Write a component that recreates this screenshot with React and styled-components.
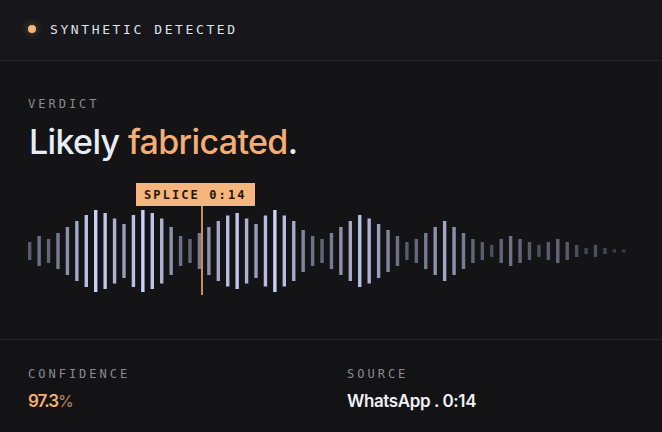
import React from 'react';
import styled, { createGlobalStyle } from 'styled-components';

const GlobalStyle = createGlobalStyle`
html, body {
    margin: 0;
    padding: 0;
    background: #131316;
}
* {
    box-sizing: border-box;
}
`;

const mono = `"DejaVu Sans Mono", "Liberation Mono", monospace`;
const sans = `Inter, "Noto Sans", "Liberation Sans", sans-serif`;

const Card = styled.div`
width: 662px;
height: 432px;
display: flex;
flex-direction: column;
background: #141417;
overflow: hidden;
`;

const Header = styled.header`
height: 61px;
flex-shrink: 0;
display: flex;
align-items: center;
gap: 14px;
padding: 0 28px 2px 28px;
background: #17171b;
border-bottom: 1px solid #26262b;
`;

const Dot = styled.span`
width: 8px;
height: 8px;
border-radius: 50%;
background: #f6b77c;
box-shadow: 0 0 8px rgba(246, 183, 124, 0.45);
`;

const Status = styled.span`
font-family: ${mono};
font-size: 13px;
letter-spacing: 2.6px;
color: #dfe2e8;
`;

const Main = styled.section`
padding: 35px 28px 44px 28px;
border-bottom: 1px solid #232328;
`;

const Label = styled.div`
font-family: ${mono};
font-size: 12px;
line-height: 16px;
letter-spacing: 3px;
color: #8a8a91;
`;

const Headline = styled.h1`
margin: 11px 0 0 1px;
font-family: ${sans};
font-size: 34px;
line-height: 37px;
font-weight: 500;
letter-spacing: -0.65px;
color: #e7edf7;
`;

const Accent = styled.span`
color: #f4ae74;
`;

const Wave = styled.div`
position: relative;
margin-top: 23px;
padding-top: 24px;
`;

const Bars = styled.svg`
display: block;
width: 606px;
height: 88px;
`;

const SpliceTag = styled.div`
position: absolute;
top: 0;
left: ${props => props.left}px;
padding: 0 8px;
height: 23px;
display: flex;
align-items: center;
background: #f5b57c;
font-family: ${mono};
font-size: 12px;
font-weight: bold;
letter-spacing: 2.1px;
color: #1d1712;
`;

const SpliceLine = styled.div`
position: absolute;
top: 23px;
bottom: 0;
left: ${props => props.left}px;
width: 2px;
background: #c98e5b;
`;

const Footer = styled.footer`
flex: 1;
display: grid;
grid-template-columns: 1fr 1fr;
column-gap: 32px;
padding: 26px 28px 0 28px;
background: #131316;
`;

const Stat = styled.div`
display: flex;
flex-direction: column;
gap: 8px;
`;

const Value = styled.div`
font-family: ${sans};
font-size: 17px;
line-height: 22px;
font-weight: 600;
letter-spacing: ${props => props.accent ? '-1px' : '-0.4px'};
color: ${props => props.accent ? '#f4ae74' : '#eef0f4'};
`;

const Unit = styled.span`
font-weight: 400;
font-size: 16px;
letter-spacing: 0;
opacity: 0.75;
`;

const heights = [
    18, 30, 24, 36, 48, 60, 72, 82, 76, 65, 54, 72, 82, 76, 65, 48,
    30, 24, 36, 48, 60, 71, 76, 65, 54, 71, 82, 71, 60, 42, 30, 24,
    36, 48, 60, 72, 65, 54, 42, 30, 18, 24, 36, 48, 60, 48, 36, 24,
    18, 12, 24, 30, 24, 18, 12, 18, 24, 18, 12, 6, 12, 6, 3, 3,
];

function Waveform() {
    return (
        <Bars viewBox="0 0 606 88">
            {heights.map((h, i) => (
                <rect
                    key={i}
                    x={i * 9.43}
                    y={44 - h / 2}
                    width={3.4}
                    height={h}
                    fill="#cbd1f7"
                    opacity={0.2 + 0.8 * (h / 82)}
                />
            ))}
        </Bars>
    );
}

function App() {
    return (
        <Card>
            <GlobalStyle />
            <Header>
                <Dot />
                <Status>SYNTHETIC DETECTED</Status>
            </Header>
            <Main>
                <Label>VERDICT</Label>
                <Headline>Likely <Accent>fabricated</Accent>.</Headline>
                <Wave>
                    <Waveform />
                    <SpliceTag left={108}>SPLICE 0:14</SpliceTag>
                    <SpliceLine left={173} />
                </Wave>
            </Main>
            <Footer>
                <Stat>
                    <Label>CONFIDENCE</Label>
                    <Value accent>97.3<Unit>%</Unit></Value>
                </Stat>
                <Stat>
                    <Label>SOURCE</Label>
                    <Value>WhatsApp . 0:14</Value>
                </Stat>
            </Footer>
        </Card>
    );
}

export default App;
